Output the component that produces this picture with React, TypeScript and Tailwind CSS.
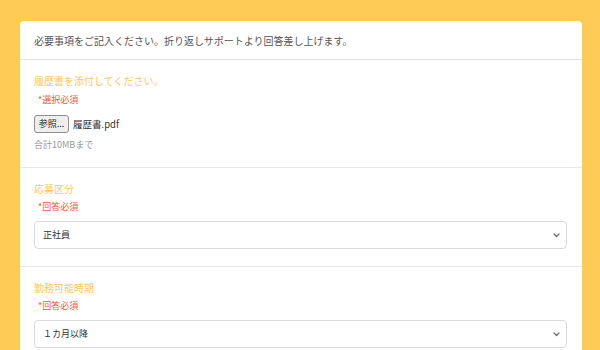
import React from 'react'

const jp = { fontFamily: '"Noto Sans CJK JP", "Noto Sans", sans-serif' }

const Chevron = () => (
    <svg width="7" height="5" viewBox="0 0 7 5" fill="none">
        <path d="M1 1 L3.5 3.5 L6 1" stroke="#6b6b6b" strokeWidth="1.3" strokeLinecap="round" strokeLinejoin="round" />
    </svg>
)

const Field = ({ label, required, children, last }: { label: string; required: string; children: React.ReactNode; last?: boolean }) => {
    return (
        <div className={`pl-[14px] pr-[15px] pt-[14px] ${last ? 'pb-[17px]' : 'pb-[17px] border-b border-[#e8e8e8]'}`}>
            {/* Label */}
            <div className="text-[10px] leading-[14px] text-[#fbc766]">{label}</div>
            {/* Required mark */}
            <div className="mt-[4px] pl-[4px] text-[9px] leading-[14px] text-[#ee5a3e]">*{required}</div>
            {children}
        </div>
    )
}

const FakeSelect = ({ value }: { value: string }) => (
    <div className="mt-[7px] h-[28px] flex items-center justify-between rounded-[4px] border border-[#dadada] bg-white pl-[8px] pr-[6px]">
        <span className="text-[9px] text-[#333]">{value}</span>
        <Chevron />
    </div>
)

export default function App() {
    return (
        <div className="min-h-[350px] w-[600px] bg-[#fecb55] pt-[21px] overflow-hidden" style={jp}>
            <div className="ml-[20px] w-[562px] rounded-[4px] bg-white">
                {/* Header */}
                <div className="h-[39px] flex items-center px-[14px] border-b border-[#e3e3e3]">
                    <span className="text-[10px] text-[#555]">必要事項をご記入ください。折り返しサポートより回答差し上げます。</span>
                </div>

                {/* Resume upload */}
                <div className="pl-[14px] pr-[15px] pt-[14px] pb-[15px] border-b border-[#e8e8e8]">
                    <div className="text-[10px] leading-[14px] text-[#fbc766]">履歴書を添付してください。</div>
                    <div className="mt-[5px] pl-[4px] text-[9px] leading-[14px] text-[#ee5a3e]">*選択必須</div>
                    <div className="mt-[8px] flex items-center gap-[4px]">
                        <div className="h-[18px] w-[35px] flex items-center justify-center rounded-[3px] border border-[#8f8f8f] bg-[#efefef] text-[9px] text-[#222]">
                            参照...
                        </div>
                        <span className="text-[9.5px] text-[#333]">履歴書.pdf</span>
                    </div>
                    <div className="mt-[5px] text-[9px] leading-[14px] text-[#999]">合計10MBまで</div>
                </div>

                <Field label="応募区分" required="回答必須">
                    <FakeSelect value="正社員" />
                </Field>

                <Field label="勤務可能時期" required="回答必須" last>
                    <FakeSelect value="１カ月以降" />
                </Field>
            </div>
        </div>
    )
}
